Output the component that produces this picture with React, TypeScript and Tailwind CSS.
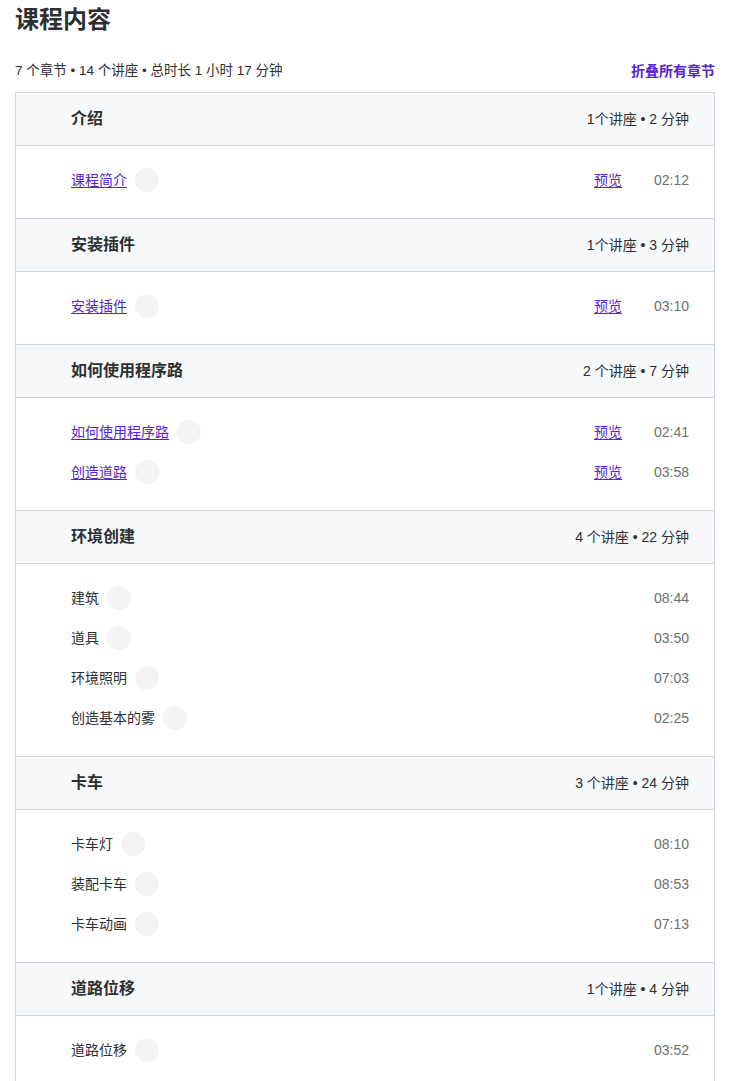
type Lecture = { title: string; time: string; preview?: boolean };
type Section = { title: string; meta: string; lectures: Lecture[] };

const sections: Section[] = [
  {
    title: "介绍",
    meta: "1个讲座 • 2 分钟",
    lectures: [{ title: "课程简介", time: "02:12", preview: true }],
  },
  {
    title: "安装插件",
    meta: "1个讲座 • 3 分钟",
    lectures: [{ title: "安装插件", time: "03:10", preview: true }],
  },
  {
    title: "如何使用程序路",
    meta: "2 个讲座 • 7 分钟",
    lectures: [
      { title: "如何使用程序路", time: "02:41", preview: true },
      { title: "创造道路", time: "03:58", preview: true },
    ],
  },
  {
    title: "环境创建",
    meta: "4 个讲座 • 22 分钟",
    lectures: [
      { title: "建筑", time: "08:44" },
      { title: "道具", time: "03:50" },
      { title: "环境照明", time: "07:03" },
      { title: "创造基本的雾", time: "02:25" },
    ],
  },
  {
    title: "卡车",
    meta: "3 个讲座 • 24 分钟",
    lectures: [
      { title: "卡车灯", time: "08:10" },
      { title: "装配卡车", time: "08:53" },
      { title: "卡车动画", time: "07:13" },
    ],
  },
  {
    title: "道路位移",
    meta: "1个讲座 • 4 分钟",
    lectures: [{ title: "道路位移", time: "03:52" }],
  },
];

function LectureRow({ lecture }: { lecture: Lecture }) {
  return (
    <div className="flex h-10 items-center">
      <div className="flex flex-1 items-center gap-2">
        {lecture.preview ? (
          <a href="#" className="text-sm text-[#5624d0] underline underline-offset-2">
            {lecture.title}
          </a>
        ) : (
          <span className="text-sm text-[#2d2f31]">{lecture.title}</span>
        )}
        <span className="h-6 w-6 rounded-full bg-[#f3f4f6]" />
      </div>
      {lecture.preview && (
        <a href="#" className="mr-8 text-sm text-[#5624d0] underline underline-offset-2">
          预览
        </a>
      )}
      <span className="text-sm text-[#6a6f73]">{lecture.time}</span>
    </div>
  );
}

export default function App() {
  return (
    <div
      className="w-[730px] bg-white px-[15px] pt-[5px] text-[#2d2f31]"
      style={{ fontFamily: '"Liberation Sans", "Noto Sans CJK SC", sans-serif' }}
    >
      <h2 className="text-2xl font-bold leading-[30px]">课程内容</h2>
      <div className="mt-[26px] mb-[11px] flex items-center justify-between">
        <span className="text-[13.5px] leading-5">7 个章节 • 14 个讲座 • 总时长 1 小时 17 分钟</span>
        <button className="text-sm font-bold leading-5 text-[#5624d0]">折叠所有章节</button>
      </div>
      <div className="w-[700px] border border-b-0 border-[#d1d7dc]">
        {sections.map((s) => (
          <div key={s.title}>
            <div className="flex h-[53px] items-center justify-between border-b border-[#d1d7dc] bg-[#f7f8fa] pl-[55px] pr-[25px]">
              <span className="text-base font-bold">{s.title}</span>
              <span className="text-sm">{s.meta}</span>
            </div>
            <div className="border-b border-[#d1d7dc] pt-[14px] pb-[18px] pl-[55px] pr-[25px]">
              {s.lectures.map((l) => (
                <LectureRow key={l.title} lecture={l} />
              ))}
            </div>
          </div>
        ))}
      </div>
    </div>
  );
}
